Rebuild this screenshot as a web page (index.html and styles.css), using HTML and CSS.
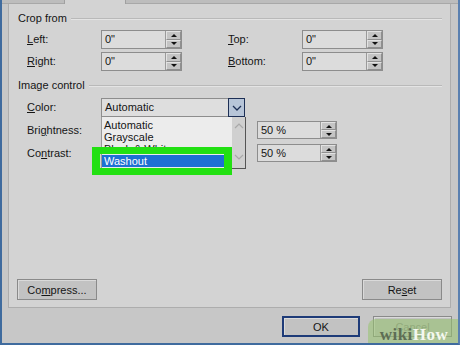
FILE: index.html
```html
<!DOCTYPE html>
<html lang="en">
<head>
    <meta charset="UTF-8">
    <title>Format Picture</title>
    <link rel="stylesheet" href="styles.css">
</head>
<body>
    <div class="window">
        <div class="tabs">
            <span class="tab-strip"></span>
            <span class="tab active"></span>
            <span class="tab-strip grow"></span>
        </div>

        <div class="panel">
            <div class="group-title"><span>Crop from</span></div>
            <div class="crop-grid">
                <label><u>L</u>eft:</label>
                <div class="spin"><span class="spin-text">0"</span><span class="spin-btns"><i class="up"></i><i class="down"></i></span></div>
                <label><u>T</u>op:</label>
                <div class="spin"><span class="spin-text">0"</span><span class="spin-btns"><i class="up"></i><i class="down"></i></span></div>
                <label><u>R</u>ight:</label>
                <div class="spin"><span class="spin-text">0"</span><span class="spin-btns"><i class="up"></i><i class="down"></i></span></div>
                <label><u>B</u>ottom:</label>
                <div class="spin"><span class="spin-text">0"</span><span class="spin-btns"><i class="up"></i><i class="down"></i></span></div>
            </div>

            <div class="group-title"><span>Image control</span></div>
            <div class="image-rows">
                <div class="row">
                    <label><u>C</u>olor:</label>
                    <div class="select">
                        <span class="select-text">Automatic</span>
                        <span class="select-btn">
                            <svg width="10" height="6" viewBox="0 0 10 6"><path d="M1 1 L5 5 L9 1" fill="none" stroke="#1d2f55" stroke-width="1.3"/></svg>
                        </span>
                    </div>
                </div>
                <div class="row">
                    <label>Bri<u>g</u>htness:</label>
                    <div class="slider-slot"></div>
                    <div class="spin pct"><span class="spin-text">50 %</span><span class="spin-btns"><i class="up"></i><i class="down"></i></span></div>
                </div>
                <div class="row">
                    <label>Co<u>n</u>trast:</label>
                    <div class="slider-slot"></div>
                    <div class="spin pct"><span class="spin-text">50 %</span><span class="spin-btns"><i class="up"></i><i class="down"></i></span></div>
                </div>

                <div class="dropdown">
                    <ul class="options">
                        <li>Automatic</li>
                        <li>Grayscale</li>
                        <li>Black &amp; White</li>
                        <li class="selected">Washout</li>
                    </ul>
                    <div class="list-scroll">
                        <svg width="10" height="6" viewBox="0 0 10 6"><path d="M1 5 L5 1 L9 5" fill="none" stroke="#a9a9a9" stroke-width="1.2"/></svg>
                        <svg width="10" height="6" viewBox="0 0 10 6"><path d="M1 1 L5 5 L9 1" fill="none" stroke="#a9a9a9" stroke-width="1.2"/></svg>
                    </div>
                </div>
                <div class="callout"></div>
            </div>

            <div class="panel-foot">
                <button class="btn">Co<u>m</u>press...</button>
                <button class="btn">Re<u>s</u>et</button>
            </div>
        </div>

        <div class="dialog-buttons">
            <button class="btn ok">OK</button>
            <button class="btn cancel">Cancel</button>
        </div>

        <div class="watermark"><span class="wiki">wiki</span><span class="how">How</span></div>
    </div>
</body>
</html>
```

FILE: styles.css
```css
body {
    margin: 0;
    padding: 0;
    font-family: "Liberation Sans", Arial, sans-serif;
    font-size: 11px;
    color: #151515;
}

.window {
    position: relative;
    width: 460px;
    height: 345px;
    box-sizing: border-box;
    background: #c7c7c7;
    border-left: 2px solid #3f6b9e;
    border-right: 2px solid #5a80b0;
    border-bottom: 2px solid #3f6b9e;
    display: flex;
    flex-direction: column;
    overflow: hidden;
}

/* tab strip at the top edge */
.tabs {
    display: flex;
    height: 4px;
}

.tab-strip {
    width: 62px;
    background: #bdbdbd;
    border-bottom: 1px solid #a8a8a8;
}

.tab-strip.grow {
    flex: 1;
    width: auto;
}

.tab {
    width: 60px;
    background: #d3d3d3;
    border-left: 1px solid #a0a0a0;
    border-right: 1px solid #a0a0a0;
}

.panel {
    height: 304px;
    box-sizing: border-box;
    margin: 0 7px 0 6px;
    padding: 8px 8px 7px 9px;
    background: #d3d3d3;
    border: 1px solid #adadad;
    border-top: none;
    display: flex;
    flex-direction: column;
}

.group-title {
    display: flex;
    align-items: center;
    gap: 4px;
    height: 13px;
    line-height: 13px;
}

.group-title::after {
    content: "";
    flex: 1;
    border-top: 1px solid #b9b9b9;
    border-bottom: 1px solid #e4e4e4;
}

label {
    display: block;
    line-height: 19px;
}

u {
    text-decoration: underline;
    text-underline-offset: 1px;
}

.crop-grid {
    display: grid;
    grid-template-columns: 74px 81px 120px 81px;
    grid-template-rows: 19px 19px;
    row-gap: 3px;
    margin: 5px 0 8px 9px;
}

.crop-grid label:nth-child(4n+3) {
    padding-left: 46px;
}

/* spin box */
.spin {
    display: flex;
    height: 19px;
    box-sizing: border-box;
    border: 1px solid #8d8d8d;
    background: #dcdcdc;
}

.spin-text {
    flex: 1;
    padding-left: 3px;
    line-height: 17px;
}

.spin-btns {
    width: 15px;
    display: flex;
    flex-direction: column;
    border-left: 1px solid #9a9a9a;
}

.spin-btns i {
    flex: 1;
    background: #c4c4c4;
    border: 1px solid #e2e2e2;
    border-right-color: #8f8f8f;
    border-bottom-color: #8f8f8f;
    display: flex;
    align-items: center;
    justify-content: center;
}

.spin-btns i::before {
    content: "";
    border-left: 3px solid transparent;
    border-right: 3px solid transparent;
}

.spin-btns .up::before {
    border-bottom: 3px solid #111;
}

.spin-btns .down::before {
    border-top: 3px solid #111;
}

.image-rows {
    position: relative;
    display: flex;
    flex-direction: column;
    gap: 4px;
    margin: 6px 0 0 9px;
}

.row {
    display: flex;
    height: 19px;
}

.row label {
    width: 74px;
}

.select {
    width: 144px;
    height: 19px;
    box-sizing: border-box;
    display: flex;
    border: 1px solid #8d8d8d;
    background: #dedede;
}

.select-text {
    flex: 1;
    padding-left: 3px;
    line-height: 17px;
}

.select-btn {
    width: 15px;
    margin: -1px -1px -1px 0;
    border: 1px solid #1d2f55;
    background: #b7c5d8;
    display: flex;
    align-items: center;
    justify-content: center;
}

.slider-slot {
    width: 156px;
}

.spin.pct {
    width: 80px;
    height: 18px;
}

.spin.pct .spin-text {
    line-height: 16px;
}

/* open list of the Color box */
.dropdown {
    position: absolute;
    left: 74px;
    top: 19px;
    width: 145px;
    height: 52px;
    box-sizing: border-box;
    display: flex;
    background: #ececec;
    border: 1px solid #555;
    border-top: none;
    border-left-color: #9a9a9a;
}

.options {
    flex: 1;
    list-style: none;
    margin: 0;
    padding: 2px 0 0;
    overflow: hidden;
}

.options li {
    height: 12px;
    line-height: 12px;
    padding-left: 2px;
}

.options li.selected {
    background: #1d71d3;
    color: #fff;
}

.list-scroll {
    width: 13px;
    background: #d0d0d0;
    display: flex;
    flex-direction: column;
    justify-content: space-between;
    align-items: center;
    padding: 6px 0 8px;
}

.callout {
    position: absolute;
    left: 65px;
    top: 49px;
    width: 140px;
    height: 28px;
    box-sizing: border-box;
    border: 7px solid #22e012;
    border-left-width: 8px;
    border-right-width: 8px;
}

.panel-foot {
    margin-top: auto;
    margin-left: -1px;
    display: flex;
    justify-content: space-between;
}

.btn {
    width: 80px;
    height: 21px;
    padding: 0;
    font-family: "Liberation Sans", Arial, sans-serif;
    font-size: 11px;
    color: #151515;
    background: #c2c2c2;
    border: 1px solid #8a8a8a;
    box-shadow: inset 1px 1px 0 #dadada;
}

.dialog-buttons {
    display: flex;
    justify-content: flex-end;
    gap: 13px;
    margin-top: 8px;
    padding-right: 6px;
}

.btn.ok {
    width: 78px;
    border: 2px solid #1e3b78;
}

.btn.cancel {
    width: 79px;
    color: #8c8c8c;
}

.watermark {
    position: absolute;
    right: -2px;
    bottom: -2px;
    width: 92px;
    height: 26px;
    border-radius: 8px 0 0 0;
    background: rgba(150, 195, 110, 0.55);
    font-family: "Liberation Serif", "Times New Roman", serif;
    font-size: 17px;
    font-weight: bold;
    line-height: 32px;
    text-align: center;
    letter-spacing: 0.5px;
}

.watermark .wiki {
    color: #5e6e55;
}

.watermark .how {
    color: #f4f8ef;
}
```
